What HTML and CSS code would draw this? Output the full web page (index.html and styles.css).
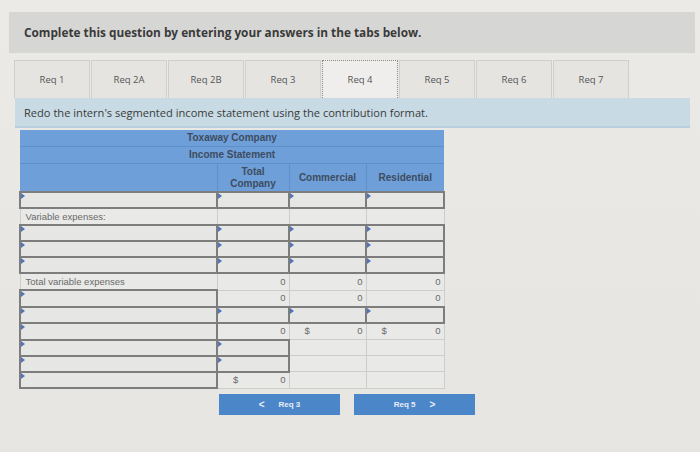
FILE: index.html
```html
<!DOCTYPE html>
<html>
<head>
<meta charset="utf-8">
<link rel="stylesheet" href="styles.css">
</head>
<body>
<div class="page">
  <div class="header">Complete this question by entering your answers in the tabs below.</div>
  <div class="tabs">
    <div class="tab">Req 1</div>
    <div class="tab">Req 2A</div>
    <div class="tab">Req 2B</div>
    <div class="tab">Req 3</div>
    <div class="tab active">Req 4</div>
    <div class="tab">Req 5</div>
    <div class="tab">Req 6</div>
    <div class="tab">Req 7</div>
  </div>
  <div class="instruction">Redo the intern's segmented income statement using the contribution format.</div>
  <div class="sheet">
    <table class="stmt">
      <colgroup><col class="c-label"><col class="c-total"><col class="c-com"><col class="c-res"></colgroup>
      <tr class="title"><td colspan="4">Toxaway Company</td></tr>
      <tr class="title"><td colspan="4">Income Statement</td></tr>
      <tr class="heads"><td></td><td>Total<br>Company</td><td>Commercial</td><td>Residential</td></tr>
      <tr><td class="in"></td><td class="in"></td><td class="in"></td><td class="in"></td></tr>
      <tr><td class="lbl">Variable expenses:</td><td></td><td></td><td></td></tr>
      <tr><td class="in"></td><td class="in"></td><td class="in"></td><td class="in"></td></tr>
      <tr><td class="in"></td><td class="in"></td><td class="in"></td><td class="in"></td></tr>
      <tr><td class="in"></td><td class="in"></td><td class="in"></td><td class="in"></td></tr>
      <tr><td class="lbl">Total variable expenses</td><td class="num">0</td><td class="num">0</td><td class="num">0</td></tr>
      <tr><td class="in"></td><td class="num">0</td><td class="num">0</td><td class="num">0</td></tr>
      <tr><td class="in"></td><td class="in"></td><td class="in"></td><td class="in"></td></tr>
      <tr><td class="in"></td><td class="num">0</td><td class="num"><span class="dol">$</span>0</td><td class="num"><span class="dol">$</span>0</td></tr>
      <tr><td class="in"></td><td class="in"></td><td></td><td></td></tr>
      <tr><td class="in"></td><td class="in"></td><td></td><td></td></tr>
      <tr><td class="in"></td><td class="num"><span class="dol">$</span>0</td><td></td><td></td></tr>
    </table>
    <div class="nav">
      <div class="btn"><span class="chev">&lt;</span>Req 3</div>
      <div class="btn">Req 5<span class="chev right">&gt;</span></div>
    </div>
  </div>
</div>
</body>
</html>
```

FILE: styles.css
```css
html, body {
  margin: 0;
  padding: 0;
}
body {
  width: 700px;
  height: 452px;
  overflow: hidden;
  background: linear-gradient(#eceae7, #e6e5e2);
  font-family: "Open Sans", "Liberation Sans", sans-serif;
}
.page {
  padding-top: 12px;
}
.header {
  margin-left: 9px;
  width: 671px;
  height: 39px;
  padding-left: 15px;
  padding-bottom: 2px;
  background: #d6d6d4;
  display: flex;
  align-items: center;
  font-size: 11.8px;
  font-weight: 700;
  color: #3a3a3a;
}
.tabs {
  display: flex;
  margin: 7px 0 0 14px;
  gap: 1px;
}
.tab {
  width: 74px;
  height: 37px;
  border: 1px solid #cfcfcd;
  border-bottom: none;
  background: #e5e4e1;
  display: flex;
  align-items: center;
  justify-content: center;
  font-size: 9.5px;
  color: #555;
}
.tab.active {
  background: #efeeec;
  border: 1px dotted #8a8a8a;
  border-bottom: none;
}
.instruction {
  margin-left: 15px;
  width: 666px;
  height: 28px;
  padding-left: 9px;
  background: #c8dae4;
  display: flex;
  align-items: center;
  font-size: 11.1px;
  color: #3a3a3a;
  border-bottom: 2px solid #b9cfe0;
}
.sheet {
  margin-left: 19px;
  padding-top: 2px;
}
.stmt {
  border-collapse: collapse;
  table-layout: fixed;
  width: 424px;
  font-family: "Liberation Sans", Arial, sans-serif;
}
.c-label { width: 197px; }
.c-total { width: 72px; }
.c-com { width: 77px; }
.c-res { width: 78px; }
.stmt td {
  height: 15px;
  padding: 0 3px;
  border: 1px solid #cdcdcb;
  background: #e9e9e7;
  font-size: 9.5px;
  line-height: 10px;
  color: #6a6a6a;
  position: relative;
}
.stmt td.lbl {
  padding-left: 5px;
}
.stmt tr.title td {
  height: 16px;
  background: #6f9fd8;
  border: none;
  border-bottom: 1px solid #5f8fc8;
  text-align: center;
  font-weight: 700;
  font-size: 10px;
  color: #3d4c60;
}
.stmt tr.heads td {
  height: 27px;
  background: #6f9fd8;
  border: none;
  border-left: 1px solid #5f8fc8;
  text-align: center;
  font-weight: 700;
  font-size: 10px;
  line-height: 12px;
  color: #3d4c60;
}
.stmt tr.heads td:first-child {
  border-left: none;
}
.stmt td.in {
  height: 14px;
  background: #e6e6e4;
  border: 2px solid #7d7d7d;
}
.stmt td.in::before {
  content: "";
  position: absolute;
  left: 0;
  top: 0;
  border-top: 3px solid transparent;
  border-bottom: 3px solid transparent;
  border-left: 4px solid #5075b8;
}
.stmt td.num {
  text-align: right;
}
.dol {
  float: left;
  padding-left: 12px;
}
.nav {
  display: flex;
  gap: 14px;
  margin: 5px 0 0 200px;
}
.btn {
  width: 121px;
  height: 21px;
  background: #4b86c8;
  color: #e8eef8;
  font-family: "Liberation Sans", Arial, sans-serif;
  font-weight: 700;
  font-size: 8px;
  display: flex;
  align-items: center;
  justify-content: center;
}
.chev {
  font-size: 10px;
  margin-right: 14px;
}
.chev.right {
  margin-right: 0;
  margin-left: 14px;
}
```
